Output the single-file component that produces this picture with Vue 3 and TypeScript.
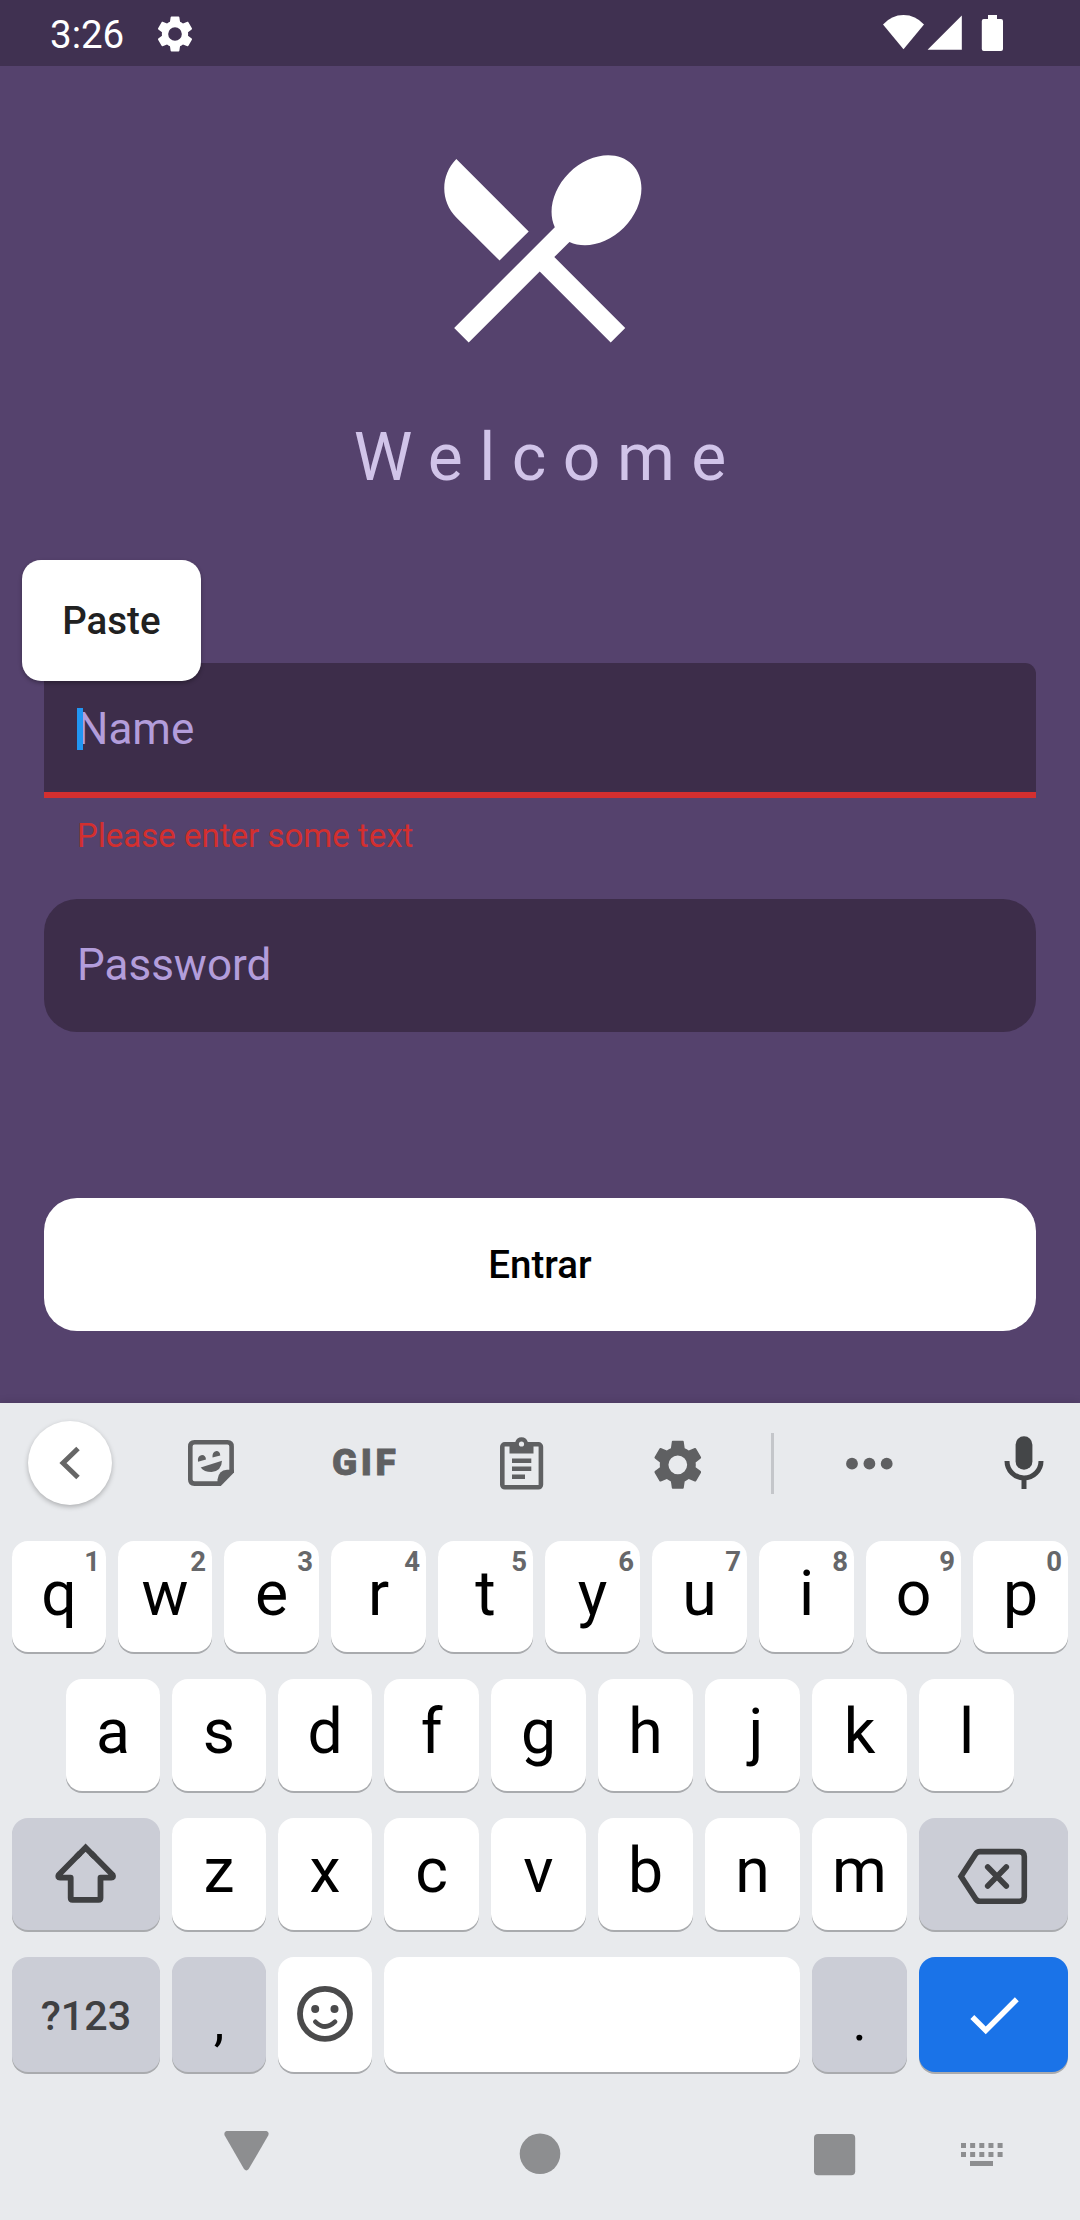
<script setup lang="ts">
interface Key {
  label: string
  width: number
  hint?: string
  kind?: 'fn' | 'enter' | 'space'
  icon?: 'shift' | 'delete' | 'emoji' | 'check'
  text?: 'small' | 'punct' | 'hooked'
}

const build = (letters: string, widths: number[], hints = ''): Key[] =>
  letters.split('').map((label, i) => ({
    label,
    width: widths[i],
    hint: hints[i],
    text: label === 'j' ? 'hooked' : undefined,
  }))

const rows: { name: string; keys: Key[] }[] = [
  { name: 'first', keys: build('qwertyuiop', [94, 94, 95, 95, 95, 95, 95, 95, 95, 95], '1234567890') },
  { name: 'second', keys: build('asdfghjkl', [94, 94, 94, 95, 95, 95, 95, 95, 95]) },
  {
    name: 'third',
    keys: [
      { label: '', width: 148, kind: 'fn', icon: 'shift' },
      ...build('zxcvbnm', [94, 94, 95, 95, 95, 95, 95]),
      { label: '', width: 149, kind: 'fn', icon: 'delete' },
    ],
  },
  {
    name: 'fourth',
    keys: [
      { label: '?123', width: 148, kind: 'fn', text: 'small' },
      { label: ',', width: 94, kind: 'fn', text: 'punct' },
      { label: '', width: 94, icon: 'emoji' },
      { label: '', width: 416, kind: 'space' },
      { label: '.', width: 95, kind: 'fn', text: 'punct' },
      { label: '', width: 149, kind: 'enter', icon: 'check' },
    ],
  },
]

const gear =
  'M19.43 12.98c.04-.32.07-.64.07-.98s-.03-.66-.07-.98l2.11-1.65c.19-.15.24-.42.12-.64l-2-3.46c-.12-.22-.39-.3-.61-.22l-2.49 1c-.52-.4-1.08-.73-1.69-.98l-.38-2.65C14.46 2.18 14.25 2 14 2h-4c-.25 0-.46.18-.49.42l-.38 2.65c-.61.25-1.17.59-1.69.98l-2.49-1c-.23-.09-.49 0-.61.22l-2 3.46c-.13.22-.07.49.12.64l2.11 1.65c-.04.32-.07.65-.07.98s.03.66.07.98l-2.11 1.65c-.19.15-.24.42-.12.64l2 3.46c.12.22.39.3.61.22l2.49-1c.52.4 1.08.73 1.69.98l.38 2.65c.03.24.24.42.49.42h4c.25 0 .46-.18.49-.42l.38-2.65c.61-.25 1.17-.59 1.69-.98l2.49 1c.23.09.49 0 .61-.22l2-3.46c.12-.22.07-.49-.12-.64l-2.11-1.65zM12 15.9a3.9 3.9 0 1 1 0-7.8 3.9 3.9 0 0 1 0 7.8z'
</script>

<template>
  <div class="screen">
    <header class="status">
      <span class="time">3:26</span>
      <svg class="status-gear" width="42" height="42" viewBox="0 0 24 24"><path :d="gear" fill="#fff" /></svg>
      <svg class="status-right" width="122" height="40" viewBox="882 13 122 40" fill="#fff">
        <path d="M903.5 49.3L883 24.5Q891.5 15 903.5 15T924 24.5Z" />
        <path d="M961.8 15.5V49.7H927.6Z" />
        <path d="M988 15h9v4h4q2 0 2 2v28q0 2-2 2h-17.200q-2 0-2-2V21q0-2 2-2H988z" />
      </svg>
    </header>

    <main class="login">
      <svg class="logo" width="247.5" height="247.5" viewBox="0 0 24 24">
        <path
          fill="#fff"
          d="M8.1 13.34l2.83-2.83L3.91 3.5c-1.56 1.56-1.56 4.09 0 5.66l4.19 4.18zm6.78-1.81c1.53.71 3.68.21 5.27-1.38 1.91-1.91 2.28-4.65.81-6.12-1.46-1.46-4.2-1.1-6.12.81-1.59 1.59-2.09 3.74-1.38 5.27L3.7 19.87l1.41 1.41L12 14.41l6.88 6.88 1.41-1.41L13.41 13l1.47-1.47z"
        />
      </svg>
      <h1 class="title">Welcome</h1>

      <div class="field name">
        <span class="placeholder">Name</span>
        <i class="caret"></i>
        <div class="paste">Paste</div>
      </div>
      <p class="error">Please enter some text</p>
      <div class="field password"><span class="placeholder">Password</span></div>
      <button class="submit" type="button">Entrar</button>
    </main>

    <section class="keyboard">
      <div class="toolbar">
        <div class="back">
          <svg width="84" height="84" viewBox="28 1421 84 84">
            <path d="M78 1448.500L63 1463L78 1477.500" fill="none" stroke="#666" stroke-width="5" />
          </svg>
        </div>
        <svg class="sticker" width="46" height="84" viewBox="188 1421 46 84" fill="#5f6062">
          <path
            d="M220 1483.600H194.500Q190.300 1483.600 190.300 1479.500V1446.500Q190.300 1442.300 194.500 1442.300H227.500Q231.600 1442.300 231.600 1446.500V1472"
            fill="none" stroke="#5f6062" stroke-width="4.600"
          />
          <path d="M217.500 1486V1479.500Q218.500 1470.500 227 1469.800H234V1472.500L220.800 1486Z" />
          <path d="M198 1461.700Q197.200 1455.600 202 1455Q205.600 1455.200 206 1459.400Z" />
          <path d="M212.500 1457.500Q212 1451.600 216.400 1451Q220 1451.200 220.300 1455.400Z" />
          <path d="M200.700 1467.500L222 1460.800Q221.500 1471.400 211.500 1472Q204 1472 200.700 1467.500Z" />
        </svg>
        <span class="gif">GIF</span>
        <svg class="clip" width="44" height="84" viewBox="500 1421 44 84">
          <rect x="502.300" y="1444.300" width="38.600" height="43" rx="2.500" fill="none" stroke="#5f6062" stroke-width="4.600" />
          <path d="M509.500 1442H515.300A6.500 6.500 0 0 1 527.800 1442H533.500V1453.500H509.500Z" fill="#5f6062" />
          <circle cx="521.500" cy="1444" r="2.600" fill="#e8eaed" />
          <path d="M512 1460.800H531.300M512 1468.700H531.300M512 1476.700H525" stroke="#5f6062" stroke-width="4.400" />
        </svg>
        <svg class="gear" width="57.600" height="57.600" viewBox="0 0 24 24"><path :d="gear" fill="#5f6062" /></svg>
        <i class="divider"></i>
        <svg class="dots" width="48" height="84" viewBox="845 1421 48 84" fill="#5f6062">
          <circle cx="852" cy="1463.700" r="5.900" /><circle cx="869.400" cy="1463.700" r="5.900" />
          <circle cx="886.700" cy="1463.700" r="5.900" />
        </svg>
        <svg class="mic" width="40" height="84" viewBox="1004 1421 40 84">
          <rect x="1015.600" y="1436.300" width="16.800" height="33.500" rx="8.400" fill="#444648" />
          <path d="M1007 1461A17 17 0 0 0 1041 1461M1024 1478V1489" fill="none" stroke="#444648" stroke-width="5" />
        </svg>
      </div>

      <div v-for="row in rows" :key="row.name" class="row" :class="row.name">
        <div
          v-for="(key, i) in row.keys"
          :key="i"
          class="key"
          :class="[key.kind, key.text]"
          :style="{ width: key.width + 'px' }"
        >
          <span v-if="key.label" class="glyph">{{ key.label }}</span>
          <span v-if="key.hint" class="hint">{{ key.hint }}</span>
          <svg v-if="key.icon === 'shift'" width="148" height="112" viewBox="12 1818 148 112" fill="none" stroke="#3f4042" stroke-width="5.800">
            <path
              stroke-linejoin="round"
              d="M80 1853.300L58.600 1875Q57.400 1877.700 60 1877.700H70.700V1898Q70.700 1899.800 72.500 1899.800H98.700Q100.500 1899.800 100.500 1898V1877.700H111.300Q114 1877.700 112.700 1875L91.200 1853.300"
            />
            <path d="M76.600 1856.700L85.600 1847.600L94.600 1856.700" />
          </svg>
          <svg v-if="key.icon === 'delete'" width="149" height="112" viewBox="919 1818 149 112" fill="none" stroke="#3f4042" stroke-width="5.600">
            <path d="M961 1876.400L975.400 1854.300Q977 1851.600 980 1851.600H1019.500Q1024.300 1851.600 1024.300 1856.500V1896.500Q1024.300 1901.300 1019.500 1901.300H980Q977 1901.300 975.400 1898.500Z" />
            <path d="M987.700 1867L1006.300 1886M1006.300 1867L987.700 1886" stroke-linecap="round" />
          </svg>
          <svg v-if="key.icon === 'emoji'" width="94" height="115" viewBox="278 1957 94 115">
            <circle cx="325" cy="2013.800" r="25" fill="none" stroke="#4a4a4b" stroke-width="5.800" />
            <circle cx="315.200" cy="2009" r="4" fill="#4a4a4b" /><circle cx="334.500" cy="2009" r="4" fill="#4a4a4b" />
            <path d="M315.400 2021.800Q325 2031.200 335 2021.800" fill="none" stroke="#4a4a4b" stroke-width="4.600" stroke-linecap="round" />
          </svg>
          <svg v-if="key.icon === 'check'" width="66" height="66" viewBox="0 0 24 24">
            <path d="M9 16.170L4.830 12l-1.420 1.410L9 19 21 7l-1.410-1.410z" fill="#fff" />
          </svg>
        </div>
      </div>

      <nav class="nav">
        <svg width="46" height="44" viewBox="223 2131 46 44">
          <path d="M226.500 2131H266.500Q269.500 2132 268.200 2135.500L248.700 2169Q246.400 2171.800 244 2169L224.700 2135.500Q223.400 2132 226.500 2131Z" fill="#8d8e90" />
        </svg>
        <svg width="42" height="44" viewBox="519 2131 42 44"><circle cx="540" cy="2153.800" r="20.300" fill="#8d8e90" /></svg>
        <svg width="42" height="45" viewBox="814 2131 42 45"><rect x="814" y="2134" width="41.200" height="41.300" rx="4" fill="#8d8e90" /></svg>
        <svg width="42" height="44" viewBox="961 2131 42 44" stroke="#8d8e90" stroke-width="5" fill="none">
          <path d="M961 2145.500H1003M961 2154.500H1003" stroke-dasharray="5 4.150" />
          <path d="M970 2163.500H993" />
        </svg>
      </nav>
    </section>
  </div>
</template>

<style>
body {
  margin: 0;
  background: #55426d;
}
</style>

<style scoped>
.screen {
  width: 1080px;
  height: 2220px;
  overflow: hidden;
  display: flex;
  flex-direction: column;
  background: #55426d;
  font-family: Roboto, sans-serif;
}
svg {
  display: block;
  flex: none;
}
.status {
  height: 66px;
  flex: none;
  display: flex;
  align-items: flex-start;
  background: #403151;
  color: #fff;
}
.time {
  width: 74px;
  margin-left: 50px;
  font-size: 38.5px;
  line-height: 70px;
}
.status-gear {
  margin: 12.5px 0 0 29.5px;
}
.status-right {
  margin: 13px 76px 0 auto;
}
.login {
  height: 1337px;
  flex: none;
  box-sizing: border-box;
  padding: 56.6px 44px 0;
  display: flex;
  flex-direction: column;
  align-items: stretch;
}
.logo {
  align-self: center;
}
.title {
  margin: 48.1px 0 0;
  padding-left: 16.5px;
  text-align: center;
  font-size: 66px;
  font-weight: 400;
  line-height: 80px;
  letter-spacing: 16.5px;
  color: #d1c4e9;
}
.field {
  position: relative;
  box-sizing: border-box;
  display: flex;
  align-items: center;
  padding-left: 33px;
  background: #3d2d4a;
}
.placeholder {
  font-size: 44px;
  line-height: 52px;
  color: #b39ddb;
}
.name {
  height: 135px;
  margin-top: 164.8px;
  padding-top: 4px;
  border-bottom: 6px solid #d32f2f;
  border-radius: 11px 11px 0 0;
}
.caret {
  position: absolute;
  left: 33px;
  top: 45px;
  width: 6px;
  height: 42px;
  background: #2196f3;
}
.paste {
  position: absolute;
  left: -22px;
  top: -103.3px;
  width: 178.700px;
  height: 121px;
  border-radius: 19px;
  background: #fff;
  box-shadow: 0 2px 4px rgba(0, 0, 0, 0.3);
  color: #212121;
  font-size: 38.5px;
  font-weight: 500;
  line-height: 122px;
  text-align: center;
}
.error {
  margin: 18.700px 0 0 33px;
  font-size: 33px;
  line-height: 38px;
  color: #d32f2f;
}
.password {
  height: 132.3px;
  margin-top: 44.6px;
  padding-bottom: 1px;
  border-radius: 33px;
}
.submit {
  height: 132.3px;
  margin-top: 166.8px;
  padding: 0;
  border: 0;
  border-radius: 33px;
  background: #fff;
  color: #000;
  font: 500 38.5px/132px Roboto, sans-serif;
}
.keyboard {
  flex: 1;
  display: flex;
  flex-direction: column;
  background: #e8eaed;
  box-shadow: 0 -1px 8px rgba(0, 0, 0, 0.12);
}
.toolbar {
  height: 138px;
  box-sizing: border-box;
  padding-top: 18px;
  display: flex;
  align-items: flex-start;
}
.back {
  margin-left: 28px;
  width: 84px;
  height: 84px;
  border-radius: 50%;
  background: #fff;
  box-shadow: 0 2px 5px rgba(0, 0, 0, 0.25);
}
.sticker {
  margin-left: 76px;
}
.gif {
  width: 68px;
  margin-left: 98px;
  font-size: 37px;
  font-weight: 900;
  line-height: 83px;
  letter-spacing: 3.6px;
  -webkit-text-stroke: 0.8px #5f6062;
  color: #5f6062;
}
.clip {
  margin-left: 100px;
}
.gear {
  margin: 15px 0 0 104.5px;
}
.divider {
  width: 3px;
  height: 61px;
  margin: 12px 0 0 65px;
  background: #c4c6ca;
}
.dots {
  margin-left: 71px;
}
.mic {
  margin-left: 111px;
}
.row {
  display: flex;
  gap: 12px;
  margin: 0 12px 27px;
  height: 112px;
}
.first {
  height: 111px;
}
.second {
  padding-left: 54px;
}
.fourth {
  height: 115px;
  margin-bottom: 0;
}
.key {
  position: relative;
  box-sizing: border-box;
  flex: none;
  display: flex;
  align-items: center;
  justify-content: center;
  border-radius: 16px;
  background: #fff;
  box-shadow: 0 2px 0 #a9abae;
  color: #000;
}
.glyph {
  font-size: 62.5px;
  line-height: 72px;
  padding-bottom: 6px;
}
.hooked {
  padding-left: 7px;
}
.hint {
  position: absolute;
  right: 6px;
  top: 5px;
  font-size: 27.5px;
  line-height: 32px;
  font-weight: 700;
  color: #66676a;
}
.fn {
  background: #cbcdd6;
}
.enter {
  background: #1a73e8;
}
.small .glyph {
  padding: 3px 0 0;
  font-size: 41.25px;
  font-weight: 500;
  color: #3f4042;
}
.punct .glyph {
  padding: 14px 0 0;
  font-size: 54px;
}
.nav {
  display: flex;
  align-items: flex-start;
  padding: 59px 0 0 223px;
}
.nav svg:nth-child(2) {
  margin-left: 250px;
}
.nav svg:nth-child(3) {
  margin-left: 253px;
}
.nav svg:nth-child(4) {
  margin-left: 105px;
}
</style>
